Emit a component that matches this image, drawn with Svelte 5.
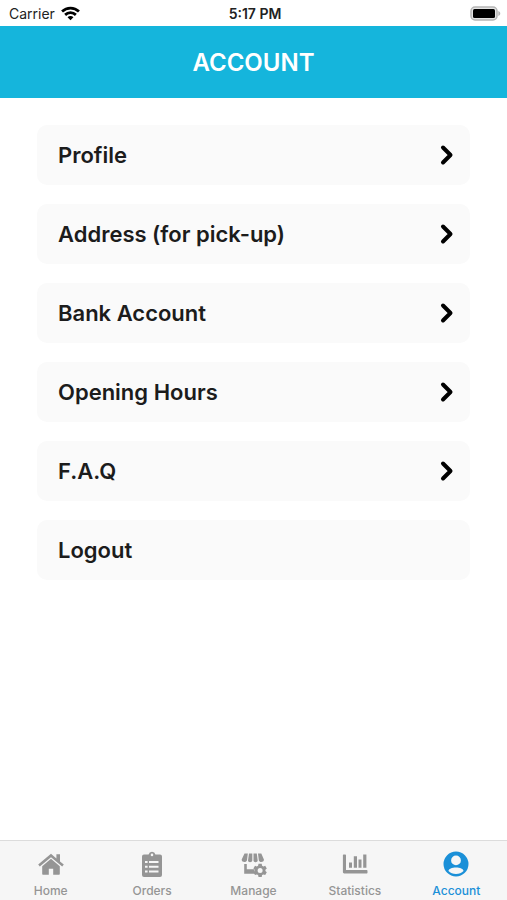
<script>
  let items = [
    { label: 'Profile', arrow: true },
    { label: 'Address (for pick-up)', arrow: true },
    { label: 'Bank Account', arrow: true },
    { label: 'Opening Hours', arrow: true },
    { label: 'F.A.Q', arrow: true },
    { label: 'Logout', arrow: false },
  ];

  let tabs = ['Home', 'Orders', 'Manage', 'Statistics', 'Account'];
  let current = 'Account';
</script>

<div class="screen">
  <div class="status">
    <div class="carrier">
      <span>Carrier</span>
      <svg width="19" height="15" viewBox="0 0 18 14" fill="none" stroke="#000" stroke-width="2.6">
        <path d="M1 5.200C5.500 .9 12.500 .9 17 5.200" />
        <path d="M3.900 8.300C6.800 5.600 11.200 5.600 14.100 8.300" />
        <path d="M6.200 10.500 9 13.400l2.800-2.900c-1.600-1.400-4-1.400-5.600 0z" fill="#000" stroke="none" />
      </svg>
    </div>
    <span class="time">5:17 PM</span>
    <div class="battery">
      <svg width="31" height="15" viewBox="0 0 31 15">
        <rect x="1" y="1" width="26" height="13" rx="4" fill="#e4e4e4" stroke="#b5b5b5" stroke-width="1.500" />
        <rect x="3" y="3" width="22" height="9" rx="1.500" fill="#000" />
        <path d="M28.300 5c2.600 1 2.600 4 0 5z" fill="#b5b5b5" />
      </svg>
    </div>
  </div>

  <header>
    <h1>ACCOUNT</h1>
  </header>

  <main>
    {#each items as item}
      <button class="item">
        <span>{item.label}</span>
        {#if item.arrow}
          <svg width="14" height="22" viewBox="0 0 14 22" fill="none" stroke="#000" stroke-width="4" stroke-linecap="round" stroke-linejoin="round">
            <path d="M3 3.500 10.500 11 3 18.500" />
          </svg>
        {/if}
      </button>
    {/each}
  </main>

  <nav>
    {#each tabs as tab}
      <button class="tab" class:active={tab === current} on:click={() => (current = tab)}>
        <svg width="26" height="26" viewBox="0 0 26 26" fill="currentColor">
          {#if tab === 'Home'}
            <path d="M13 2.800 .2 13.600l1.600 2L13 6.200l11.200 9.400 1.600-2-3.800-3.200V3.200h-3.600v4.200z" />
            <path d="M13 7.800 4.200 15.200v7.600c0 .6.400 1 1 1h5.600v-6h4.400v6h5.600c.6 0 1-.4 1-1v-7.600z" />
          {:else if tab === 'Orders'}
            <path fill-rule="evenodd" d="M5 3.500h4.600a3.500 3.500 0 0 1 6.800 0H21a2 2 0 0 1 2 2V24a2 2 0 0 1-2 2H5a2 2 0 0 1-2-2V5.500a2 2 0 0 1 2-2zM13 2.600a1.300 1.300 0 1 0 0 2.600 1.300 1.300 0 0 0 0-2.600zM6 10v2h2.600v-2zm4 0v2h9.500v-2zm-4 4.700v2h2.600v-2zm4 0v2h9.500v-2zm-4 4.700v2h2.600v-2zm4 0v2h9.500v-2z" />
          {:else if tab === 'Manage'}
            <path d="M3.500 2.500h3.300L6 9.300C5.400 12 .3 11.500.7 8.500zM8 2.500h3.300v7c-.2 2.300-4.300 2.300-4.300 0zM12.500 2.500h3.300l.9 7c0 2.300-4.200 2.300-4.200 0zM17 2.500h3.300l2.600 6c.4 3-4.600 3.500-5.100.8z" />
            <path d="M3.200 13h2.600v5.200h7.600l.6 4.600H3.200z" />
            <path fill-rule="evenodd" d="m18.300 12.800-.4 1.900-1.300.7-1.800-.6-1.600 2.700 1.400 1.200v1.400l-1.400 1.200 1.600 2.700 1.800-.6 1.300.7.400 1.900h3.200l.4-1.900 1.300-.7 1.800.6 1.600-2.700-1.400-1.200v-1.400l1.400-1.200-1.600-2.700-1.800.6-1.300-.7-.4-1.900zm1.600 4.100a2.500 2.500 0 1 1 0 5 2.500 2.500 0 0 1 0-5z" transform="translate(-.8 0)" />
          {:else if tab === 'Statistics'}
            <path d="M1.500 3.500H3c.6 0 1 .4 1 1v14.600h20.500c.6 0 1 .4 1 1v1.300c0 .6-.4 1-1 1H2.300c-.8 0-1.400-.6-1.400-1.400V4.200c0-.4.300-.7.600-.7zM7 11.500h3v5.300H7zM11.800 5.200H15v11.600h-3.200zM16.500 8.600h3v8.200h-3zM21.200 3.600h3.200v13.200h-3.200z" />
          {:else}
            <path fill-rule="evenodd" d="M13 .5a12.500 12.500 0 1 0 0 25 12.500 12.500 0 0 0 0-25zm0 4a4.900 4.900 0 1 1 0 9.800 4.900 4.900 0 0 1 0-9.800zm0 12.100c4 0 7.500 1.500 7.500 3.500-1.800 2-4.500 3-7.500 3s-5.700-1-7.500-3c0-2 3.500-3.500 7.500-3.500z" />
          {/if}
        </svg>
        <span>{tab}</span>
      </button>
    {/each}
  </nav>
</div>

<style>
  :global(body) {
    margin: 0;
    background: #fff;
  }

  .screen {
    display: flex;
    flex-direction: column;
    min-height: 100vh;
    font-family: Inter, "Liberation Sans", sans-serif;
  }

  .status {
    display: grid;
    grid-template-columns: 1fr auto 1fr;
    align-items: center;
    height: 26px;
    padding: 0 6px 0 9px;
    font-size: 14px;
    color: #222;
  }

  .carrier {
    display: flex;
    align-items: center;
    gap: 6px;
  }

  .time {
    font-weight: 600;
  }

  .battery {
    display: flex;
    justify-content: flex-end;
  }

  header {
    display: flex;
    align-items: center;
    justify-content: center;
    height: 72px;
    background: #15b5dc;
  }

  h1 {
    margin: 0;
    font-size: 24px;
    font-weight: 600;
    color: #fff;
  }

  main {
    display: flex;
    flex: 1;
    flex-direction: column;
    gap: 19px;
    padding: 27px 37px;
  }

  button {
    border: none;
    font-family: inherit;
    cursor: pointer;
  }

  .item {
    display: flex;
    align-items: center;
    justify-content: space-between;
    height: 60px;
    padding: 0 16px 0 21px;
    border-radius: 10px;
    background: #fafafa;
    font-size: 22px;
    font-weight: 600;
    color: #1c1c1c;
    text-align: left;
  }

  nav {
    display: flex;
    height: 59px;
    border-top: 1px solid #dcdcdc;
    background: #f6f6f6;
  }

  .tab {
    display: flex;
    flex: 1 1 0;
    flex-direction: column;
    align-items: center;
    gap: 6px;
    min-width: 0;
    padding: 10px 0 0;
    background: none;
    font-size: 12px;
    font-weight: 500;
    line-height: 16px;
    color: #959595;
  }

  .tab svg {
    flex: none;
  }

  .active {
    color: #1b90d8;
  }
</style>
